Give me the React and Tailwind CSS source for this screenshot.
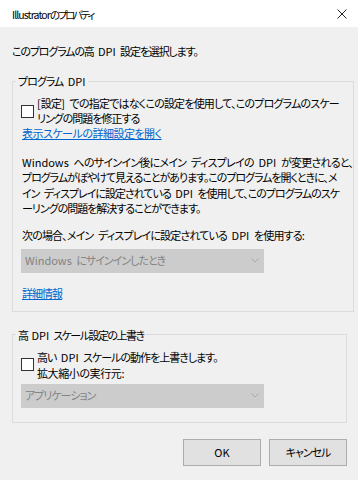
function Checkbox() {
  return <span className="block w-[13px] h-[13px] shrink-0 bg-white border border-[#333333]" />;
}

function L({ children }) {
  return <span className="tracking-normal">{children}</span>;
}

function Select({ children, className }) {
  return (
    <div className={"w-[243px] h-[24px] bg-[#cccccc] flex items-center justify-between pl-[4px] pr-[5px] text-[#838383] " + className}>
      <span className="whitespace-nowrap">{children}</span>
      <svg width="8" height="5" viewBox="0 0 8 5" className="shrink-0">
        <path d="M0.5 0.5L4 4L7.5 0.5" fill="none" stroke="#a8a8a8" strokeWidth="1" />
      </svg>
    </div>
  );
}

export default function App() {
  return (
    <div className="w-[358px] h-[480px] bg-[#f0f0f0] flex flex-col text-[11px] tracking-[-1px] [word-spacing:3px] leading-[15px] text-black font-['Noto_Sans_CJK_JP',sans-serif] [font-feature-settings:'palt'] overflow-hidden">
      <div className="h-[27px] bg-white flex items-start justify-between pl-[12px] pr-[11px] pt-[7px] shrink-0">
        <span className="whitespace-nowrap text-[10.5px]">
          <span className="tracking-[-0.9px]">Illustrator</span>
          <span className="tracking-[-2.3px]">のプロパティ</span>
        </span>
        <svg width="10" height="10" viewBox="0 0 10 10" className="mt-[2px]">
          <path d="M0.5 0.5L9.5 9.5M9.5 0.5L0.5 9.5" stroke="#222" strokeWidth="1" />
        </svg>
      </div>
      <div className="flex flex-col pl-[12px] pr-[11px]">
        <p className="mt-[17px] whitespace-nowrap tracking-[-1.15px]">
          このプログラムの高 <L>DPI</L> 設定を選択します。
        </p>

        <fieldset className="mt-[15px] border border-[#dcdcdc] pl-[8px] pb-[10px] flex flex-col items-start">
          <legend className="-ml-[5px] px-[2px] leading-[14px] whitespace-nowrap">
            プログラム <L>DPI</L>
          </legend>
          <div className="flex items-center gap-[3px] mt-[8px]">
            <Checkbox />
            <span className="whitespace-nowrap">
              <span className="tracking-[-0.8px]">
                <L>[</L>設定<L>]</L> での指定ではなくこの設定を使用して、このプログラムのスケー
              </span>
              <br />
              リングの問題を修正する
            </span>
          </div>
          <a href="#" className="ml-[1px] text-[#0066cc] underline whitespace-nowrap tracking-[-0.5px]">表示スケールの詳細設定を開く</a>
          <p className="mt-[14px] ml-[1px] leading-[15.4px] whitespace-nowrap">
            <span className="tracking-[-0.75px]">
              <L>Windows</L> へのサインイン後にメイン ディスプレイの <L>DPI</L> が変更されると、
            </span>
            <br />
            <span className="tracking-[-1.05px]">
              プログラムがぼやけて見えることがあります。このプログラムを開くときに、メ
            </span>
            <br />
            イン ディスプレイに設定されている <L>DPI</L> を使用して、このプログラムのスケ
            <br />
            ーリングの問題を解決することができます。
          </p>
          <p className="mt-[11px] ml-[1px] whitespace-nowrap tracking-[-0.85px]">
            次の場合、メイン ディスプレイに設定されている <L>DPI</L> を使用する<L>:</L>
          </p>
          <Select className="mt-[6px]">
            <L>Windows</L> にサインインしたとき
          </Select>
          <a href="#" className="mt-[13px] ml-[1px] text-[#0066cc] underline whitespace-nowrap">詳細情報</a>
        </fieldset>

        <fieldset className="mt-[16px] border border-[#dcdcdc] pl-[8px] pb-[14px] flex flex-col items-start">
          <legend className="-ml-[5px] px-[2px] leading-[14px] whitespace-nowrap tracking-[-1.5px]">
            高 <L>DPI</L> スケール設定の上書き
          </legend>
          <div className="flex items-center gap-[3px] mt-[7px]">
            <Checkbox />
            <span className="whitespace-nowrap leading-[16px]">
              高い <L>DPI</L> スケールの動作を上書きします。
              <br />
              <span className="tracking-[-0.4px]">
                拡大縮小の実行元<L>:</L>
              </span>
            </span>
          </div>
          <Select className="mt-[3px]">アプリケーション</Select>
        </fieldset>

        <div className="mt-[16px] flex justify-end gap-[8px]">
          <button className="w-[78px] h-[27px] bg-[#e1e1e1] border border-[#adadad]">
            <L>OK</L>
          </button>
          <button className="w-[78px] h-[27px] bg-[#e1e1e1] border border-[#adadad]">キャンセル</button>
        </div>
      </div>
    </div>
  );
}
